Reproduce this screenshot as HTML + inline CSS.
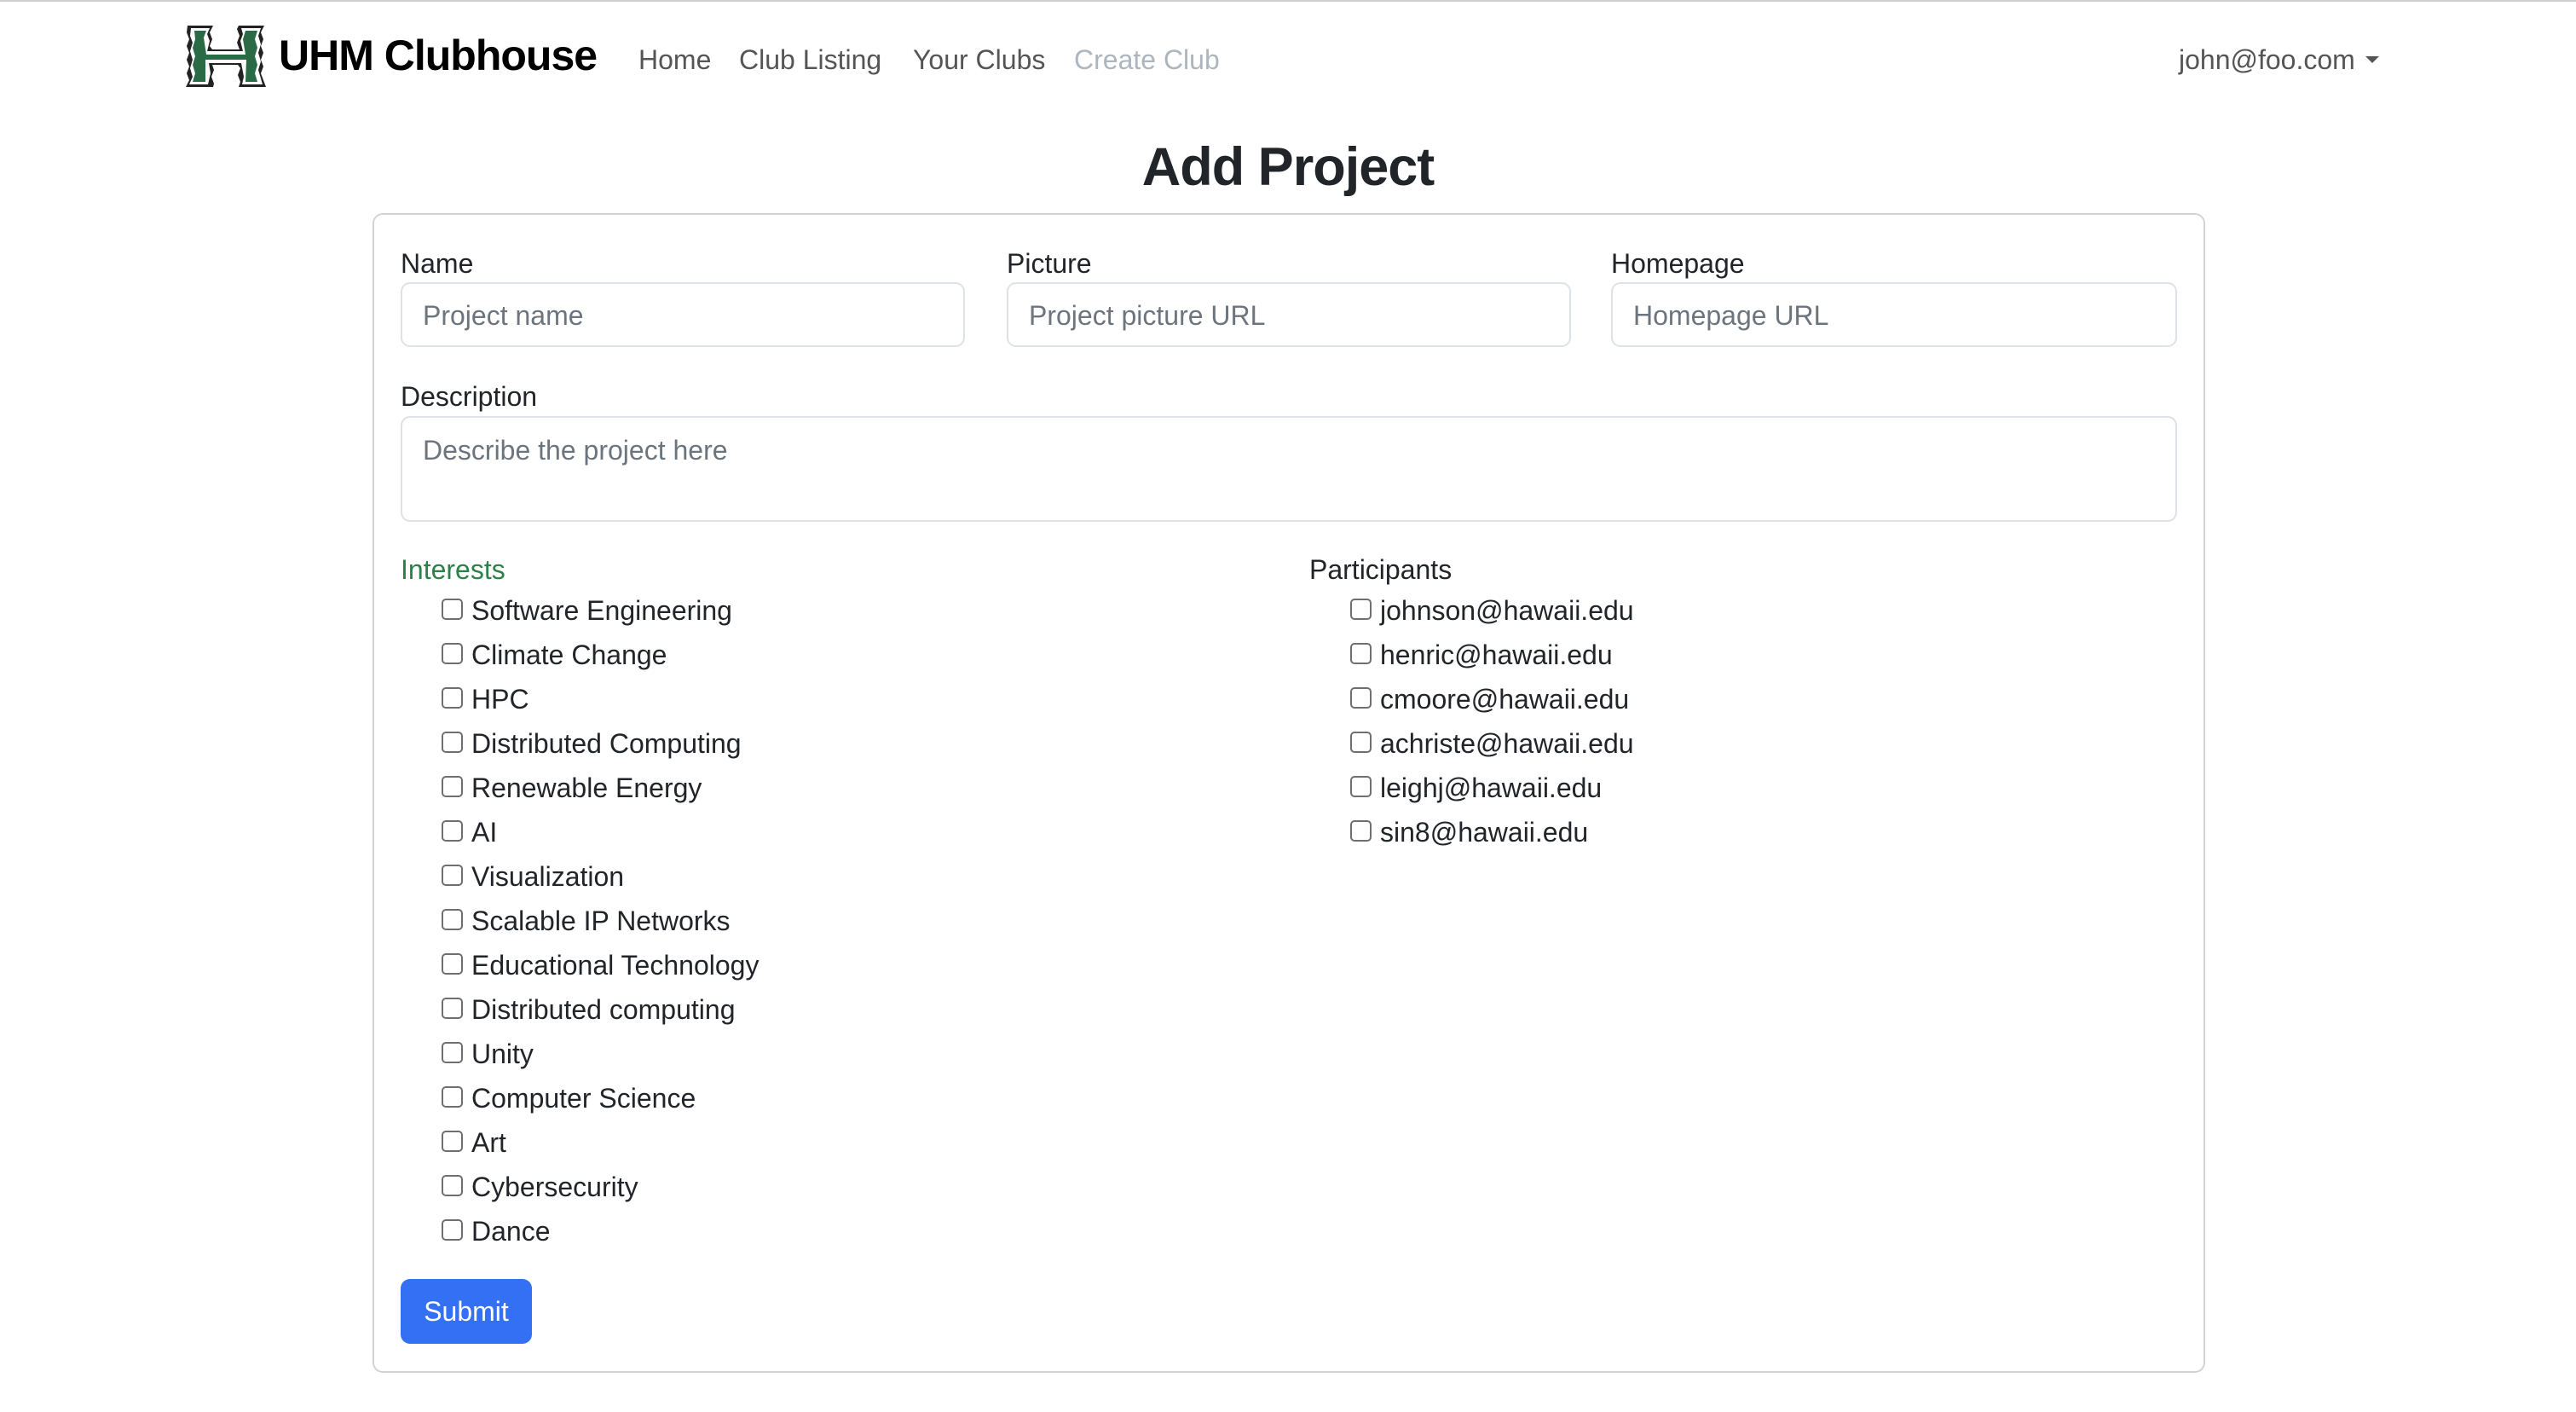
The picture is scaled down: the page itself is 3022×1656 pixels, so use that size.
<!DOCTYPE html>
<html><head><meta charset="utf-8">
<style>
*{box-sizing:border-box;margin:0;padding:0}
body{width:3022px;height:1656px;background:#fff;font-family:"Liberation Sans",sans-serif;color:#212529;position:relative;overflow:hidden}
.a{position:absolute;white-space:nowrap}
.topline{position:absolute;left:0;top:0;width:3022px;height:2px;background:#cfcfcf}
.nav{font-size:32px;color:#555;top:52px}
.lbl{font-size:32px;color:#212529}
.inp{position:absolute;border:2px solid #dee2e6;border-radius:11px;background:#fff;font-size:32px;color:#6c757d;padding-left:24px}
.card{position:absolute;left:437px;top:250px;width:2150px;height:1360px;border:2px solid #d3d3d3;border-radius:12px}
.cb{position:absolute;width:25px;height:25px;border:2px solid #6f6f6f;border-radius:5px;background:#fff}
.ct{position:absolute;font-size:32px;color:#212529;white-space:nowrap}
</style></head><body>
<div class="topline"></div>
<svg class="a" style="left:216px;top:28px" width="98" height="76" viewBox="0 0 98 76">
<polygon points="4,2 34,2 30,10 33,18 30,26 33,30 65,30 62,22 65,14 62,6 64,2 94,2 90,10 93,18 90,26 93,34 90,42 93,50 90,58 93,66 96,74 64,74 66,68 63,60 66,52 63,48 33,48 35,54 32,62 35,70 34,74 2,74 6,66 3,58 6,50 3,42 6,34 3,26 6,18 3,10" fill="#222"/>
<polygon points="8,5 30,5 27,12 30,20 27,32 69,32 66,20 69,12 67,5 90,5 87,14 90,24 87,34 90,44 87,54 90,64 92,71 68,71 70,62 67,46 29,46 31,58 28,71 6,71 10,62 7,52 10,42 7,32 10,22 7,14" fill="#fff"/>
<polygon points="12,8 26,8 23,16 26,36 72,36 69,18 72,8 86,8 83,18 86,28 83,38 86,48 83,58 86,68 72,68 73,42 25,42 25,68 10,68 13,58 10,48 13,38 10,28 13,18" fill="#2a6b45"/>
</svg>
<div class="a" style="left:327px;top:36px;font-size:50px;font-weight:bold;color:#000;letter-spacing:-1px">UHM Clubhouse</div>
<div class="a nav" style="left:749px">Home</div>
<div class="a nav" style="left:867px">Club Listing</div>
<div class="a nav" style="left:1071px">Your Clubs</div>
<div class="a nav" style="left:1260px;color:#adb5bd">Create Club</div>
<div class="a nav" style="left:2556px">john@foo.com</div>
<svg class="a" style="left:2775px;top:66px" width="16" height="9"><polygon points="0,0 16,0 8,8" fill="#555"/></svg>
<div class="a" style="left:0;width:3022px;text-align:center;top:160px;font-size:63px;font-weight:bold;letter-spacing:-1px">Add Project</div>
<div class="card"></div>
<div class="a lbl" style="left:470px;top:291px">Name</div>
<div class="a lbl" style="left:1181px;top:291px">Picture</div>
<div class="a lbl" style="left:1890px;top:291px">Homepage</div>
<div class="inp" style="left:470px;top:331px;width:662px;height:76px;line-height:74px">Project name</div>
<div class="inp" style="left:1181px;top:331px;width:662px;height:76px;line-height:74px">Project picture URL</div>
<div class="inp" style="left:1890px;top:331px;width:664px;height:76px;line-height:74px">Homepage URL</div>
<div class="a lbl" style="left:470px;top:447px">Description</div>
<div class="inp" style="left:470px;top:488px;width:2084px;height:124px;padding-top:18px;line-height:40px">Describe the project here</div>
<div class="a lbl" style="left:470px;top:650px;color:#2e8049">Interests</div>
<div class="a lbl" style="left:1536px;top:650px">Participants</div>
<div id="i"></div>
<script>
var ints=["Software Engineering","Climate Change","HPC","Distributed Computing","Renewable Energy","AI","Visualization","Scalable IP Networks","Educational Technology","Distributed computing","Unity","Computer Science","Art","Cybersecurity","Dance"];
var ps=["johnson@hawaii.edu","henric@hawaii.edu","cmoore@hawaii.edu","achriste@hawaii.edu","leighj@hawaii.edu","sin8@hawaii.edu"];
var h="";
function row(x,tx,y,t){h+='<div class="cb" style="left:'+x+'px;top:'+(y-13)+'px"></div><div class="ct" style="left:'+tx+'px;top:'+(y-17)+'px">'+t+'</div>';}
ints.forEach(function(t,k){row(518,553,715+k*52,t)});
ps.forEach(function(t,k){row(1584,1619,715+k*52,t)});
document.getElementById("i").innerHTML=h;
</script>
<div class="a" style="left:470px;top:1500px;width:154px;height:76px;background:#3370f3;border-radius:11px;color:#fff;font-size:32px;line-height:76px;text-align:center">Submit</div>
</body></html>
